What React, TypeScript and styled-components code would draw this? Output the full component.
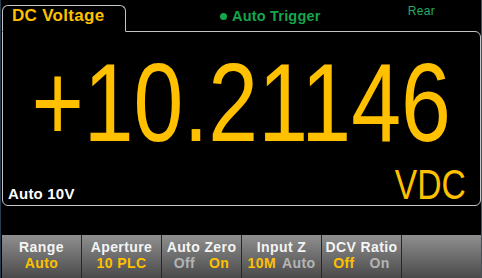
import React from "react";
import styled, { createGlobalStyle } from "styled-components";

const Global = createGlobalStyle`
  html, body { margin: 0; padding: 0; background: #000; }
  body { font-family: "Liberation Sans", Arial, sans-serif; }
`;

const YELLOW = "#ffc000";
const FRAME = "#c4c4c4";

const Screen = styled.div`
  width: 482px;
  height: 278px;
  display: flex;
  background: #000;
  overflow: hidden;
`;

const LeftEdge = styled.div`
  width: 2px;
  box-sizing: border-box;
  border-left: 1px solid #2a3b50;
`;

const RightEdge = styled.div`
  width: 1px;
  background: #4c5056;
`;

const Main = styled.div`
  width: 479px;
  display: flex;
  flex-direction: column;
`;

const TabRow = styled.div`
  display: flex;
  align-items: flex-start;
  height: 31px;
  position: relative;
  z-index: 1;
`;

const Tab = styled.div`
  margin-top: 5px;
  width: 124px;
  height: 27px;
  box-sizing: border-box;
  border: 1px solid ${FRAME};
  border-bottom: 1px solid #000;
  border-radius: 6px 6px 0 0;
  background: #000;
  padding-left: 9px;
  color: ${YELLOW};
  font-weight: bold;
  font-size: 17px;
  line-height: 20px;
  letter-spacing: 0.3px;
`;

const Trigger = styled.div`
  margin-top: 8px;
  margin-left: 94px;
  display: flex;
  align-items: center;
  gap: 5px;
  color: #14a64c;
  font-weight: bold;
  font-size: 14.5px;
  line-height: 17px;
  letter-spacing: 0.2px;
`;

const Dot = styled.span`
  width: 7px;
  height: 7px;
  border-radius: 50%;
  background: #14a64c;
`;

const Rear = styled.div`
  margin-top: 4px;
  margin-left: auto;
  margin-right: 46px;
  color: #22ad63;
  font-size: 12px;
  line-height: 14px;
  letter-spacing: 0.3px;
`;

const Body = styled.div`
  height: 175px;
  box-sizing: border-box;
  border: 1px solid ${FRAME};
  border-radius: 0 6px 6px 6px;
  display: flex;
  flex-direction: column;
`;

const Reading = styled.div`
  padding-top: 21px;
  display: flex;
  justify-content: center;
  color: ${YELLOW};
  font-size: 112px;
  line-height: 100px;
  white-space: nowrap;
`;

const Narrow = styled.span<{ $origin: string }>`
  display: inline-block;
  transform: scaleX(0.8);
  transform-origin: ${(p) => p.$origin};
`;

const BottomRow = styled.div`
  margin-top: auto;
  display: flex;
  justify-content: space-between;
  align-items: baseline;
  padding: 0 14px 2px 5px;
`;

const RangeInfo = styled.div`
  color: #fff;
  font-weight: bold;
  font-size: 15px;
  line-height: 15px;
  letter-spacing: 0.2px;
`;

const Unit = styled.div`
  color: ${YELLOW};
  font-size: 42px;
  line-height: 36px;
`;

const Keys = styled.div`
  margin-top: 29px;
  display: grid;
  grid-template-columns: repeat(6, 79px);
  gap: 1px;
  background: #262626;
  flex: 1;
`;

const Key = styled.div`
  background: linear-gradient(#8f8f8f, #4a4a4a);
  padding-top: 4px;
  display: flex;
  flex-direction: column;
  align-items: center;
  font-weight: bold;
  font-size: 14px;
  line-height: 16px;
  letter-spacing: 0.4px;
`;

const KeyLabel = styled.div`
  color: #f4f4f4;
  white-space: nowrap;
`;

const KeyValues = styled.div<{ $gap: number }>`
  display: flex;
  gap: ${(p) => p.$gap}px;
`;

const Val = styled.span<{ $on?: boolean }>`
  color: ${(p) => (p.$on ? YELLOW : "#b4b4b4")};
`;

type Opt = { text: string; on: boolean };
const keys: { label: string; values: Opt[]; gap: number }[] = [
  { label: "Range", values: [{ text: "Auto", on: true }], gap: 0 },
  { label: "Aperture", values: [{ text: "10 PLC", on: true }], gap: 0 },
  { label: "Auto Zero", values: [{ text: "Off", on: false }, { text: "On", on: true }], gap: 14 },
  { label: "Input Z", values: [{ text: "10M", on: true }, { text: "Auto", on: false }], gap: 6 },
  { label: "DCV Ratio", values: [{ text: "Off", on: true }, { text: "On", on: false }], gap: 15 },
  { label: "", values: [], gap: 0 },
];

export default function App() {
  return (
    <>
      <Global />
      <Screen>
        <LeftEdge />
        <Main>
          <TabRow>
            <Tab>DC Voltage</Tab>
            <Trigger>
              <Dot />
              Auto Trigger
            </Trigger>
            <Rear>Rear</Rear>
          </TabRow>
          <Body>
            <Reading>
              <Narrow $origin="center">+10.21146</Narrow>
            </Reading>
            <BottomRow>
              <RangeInfo>Auto 10V</RangeInfo>
              <Unit>
                <Narrow $origin="right">VDC</Narrow>
              </Unit>
            </BottomRow>
          </Body>
          <Keys>
            {keys.map((k, i) => (
              <Key key={i}>
                <KeyLabel>{k.label}</KeyLabel>
                <KeyValues $gap={k.gap}>
                  {k.values.map((v, j) => (
                    <Val key={j} $on={v.on}>
                      {v.text}
                    </Val>
                  ))}
                </KeyValues>
              </Key>
            ))}
          </Keys>
        </Main>
        <RightEdge />
      </Screen>
    </>
  );
}
